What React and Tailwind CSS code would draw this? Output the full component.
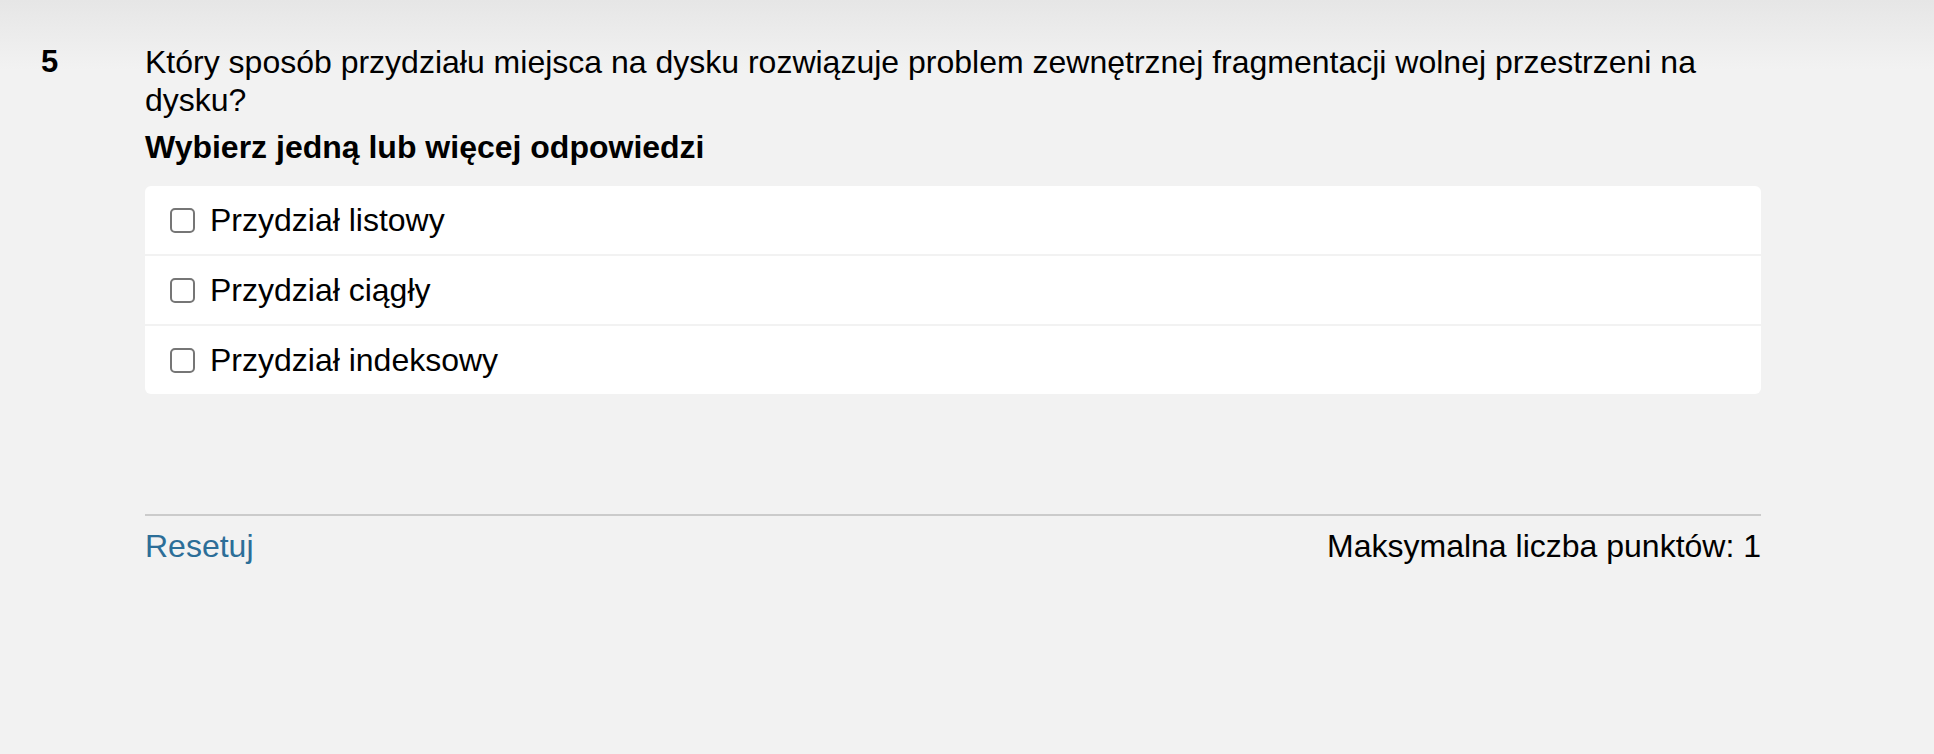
export default function App() {
  const options = ["Przydział listowy", "Przydział ciągły", "Przydział indeksowy"];
  return (
    <div
      className="min-h-[754px] w-full bg-[linear-gradient(to_bottom,#e6e6e6_0px,#f2f2f2_70px)] text-black"
      style={{ fontFamily: '"Liberation Sans", Arial, sans-serif' }}
    >
      <div className="flex pl-[41px] pt-[43px]">
        <div className="w-[104px] shrink-0 text-[31px] leading-[37px] font-bold">5</div>
        <div className="w-[1616px]">
          <div className="text-[32px] leading-[38px]">
            Który sposób przydziału miejsca na dysku rozwiązuje problem zewnętrznej fragmentacji wolnej przestrzeni na dysku?
          </div>
          <div className="mt-[10px] text-[32px] leading-[37px] font-bold">Wybierz jedną lub więcej odpowiedzi</div>
          <div className="mt-[20px] flex flex-col gap-[2px] rounded-[6px] bg-[#f2f2f2] overflow-hidden">
            {options.map((o) => (
              <label key={o} className="flex items-center bg-white h-[68px] pl-[25px] cursor-pointer">
                <span className="w-[25px] h-[25px] rounded-[5px] border-2 border-[#767676] bg-white shrink-0" />
                <span className="ml-[15px] text-[32px] leading-[37px]">{o}</span>
              </label>
            ))}
          </div>
          <div className="mt-[120px] border-t-2 border-[#cbcbcb] pt-[12px] flex justify-between text-[32px] leading-[37px]">
            <span className="text-[#2c6e98] cursor-pointer">Resetuj</span>
            <span>Maksymalna liczba punktów: 1</span>
          </div>
        </div>
      </div>
    </div>
  );
}
